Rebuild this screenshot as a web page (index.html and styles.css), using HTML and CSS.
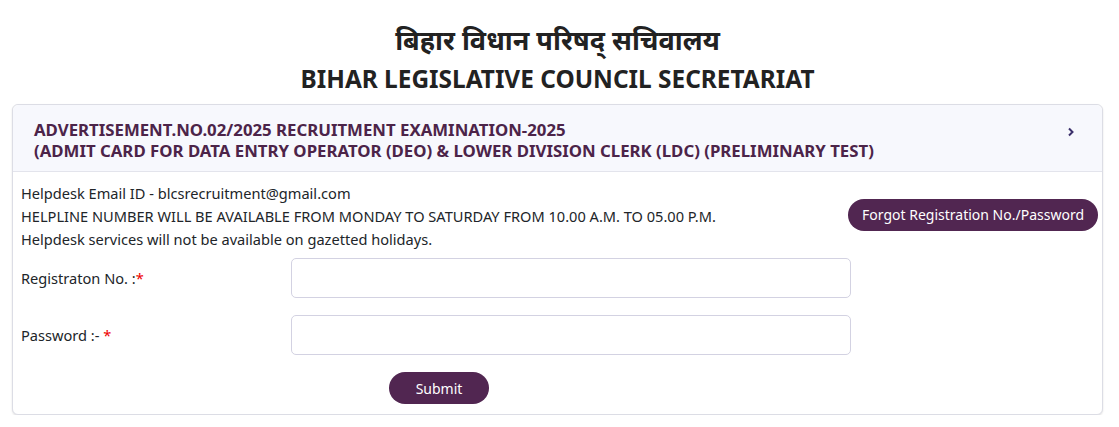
FILE: index.html
```html
<!DOCTYPE html>
<html lang="en">
<head>
<meta charset="utf-8">
<title>Bihar Legislative Council Secretariat</title>
<link rel="stylesheet" href="styles.css">
</head>
<body>
<header class="site-head">
  <h1 class="title-hi">बिहार विधान परिषद् सचिवालय</h1>
  <h2 class="title-en">BIHAR LEGISLATIVE COUNCIL SECRETARIAT</h2>
</header>
<section class="card">
  <div class="card-head">
    <div class="card-title">
      <div>ADVERTISEMENT.NO.02/2025 RECRUITMENT EXAMINATION-2025</div>
      <div>(ADMIT CARD FOR DATA ENTRY OPERATOR (DEO) &amp; LOWER DIVISION CLERK (LDC) (PRELIMINARY TEST)</div>
    </div>
    <svg class="chev" width="10" height="12" viewBox="0 0 10 12"><path d="M3 2.5 L6.5 6 L3 9.5" fill="none" stroke="#3b2f6b" stroke-width="2"/></svg>
  </div>
  <div class="card-body">
    <div class="info-row">
      <div class="info">
        <p>Helpdesk Email ID - blcsrecruitment@gmail.com</p>
        <p>HELPLINE NUMBER WILL BE AVAILABLE FROM MONDAY TO SATURDAY FROM 10.00 A.M. TO 05.00 P.M.</p>
        <p>Helpdesk services will not be available on gazetted holidays.</p>
      </div>
      <button class="btn btn-forgot" type="button">Forgot Registration No./Password</button>
    </div>
    <form class="login">
      <div class="field">
        <label for="reg">Registraton No. :<span class="req">*</span></label>
        <input id="reg" type="text">
      </div>
      <div class="field">
        <label for="pwd">Password :- <span class="req">*</span></label>
        <input id="pwd" type="password">
      </div>
      <div class="actions">
        <button class="btn btn-submit" type="button">Submit</button>
      </div>
    </form>
  </div>
</section>
</body>
</html>
```
FILE: styles.css
```css
* { box-sizing: border-box; }
body {
  margin: 0;
  padding: 0 16px 0 12px;
  font-family: "Noto Sans", "Open Sans", "Liberation Sans", sans-serif;
  color: #212529;
  background: #fff;
}
.site-head {
  text-align: center;
  padding-top: 18px;
}
.title-hi {
  margin: 0;
  font-size: 27px;
  line-height: 44px;
  font-weight: 700;
  color: #222;
}
.title-en {
  margin: 0;
  font-size: 24.4px;
  line-height: 34px;
  font-weight: 700;
  color: #222;
}
.card {
  margin-top: 8px;
  border: 1px solid #dcdde5;
  border-radius: 6px;
  box-shadow: 0 1px 2px rgba(0,0,0,0.12);
  background: #fff;
  height: 311px;
}
.card-head {
  display: flex;
  align-items: flex-start;
  justify-content: space-between;
  background: #f7f8fd;
  border-bottom: 1px solid #e3e4ec;
  border-radius: 6px 6px 0 0;
  padding: 14px 26px 11px 21px;
  height: 67px;
}
.card-title {
  font-size: 16.8px;
  font-weight: 700;
  line-height: 21px;
  color: #4c2449;
}
.chev { margin-top: 7px; }
.card-body {
  padding: 10px 4px 0 8px;
  font-size: 14.6px;
}
.info-row {
  display: flex;
  align-items: center;
  justify-content: space-between;
}
.info p {
  margin: 0;
  line-height: 23px;
}
.btn {
  border: none;
  border-radius: 17px;
  background: #512651;
  color: #fff;
  font-family: inherit;
  font-size: 14px;
  height: 32px;
}
.btn-forgot {
  padding: 0 14px;
  margin-bottom: 4px;
}
.login { margin-top: 7px; }
.field {
  display: grid;
  grid-template-columns: 270px 560px;
  align-items: center;
  margin-bottom: 17px;
}
.field label { font-size: 14.6px; }
.req { color: #e00; }
.field input {
  height: 40px;
  border: 1px solid #d3d2e2;
  border-radius: 5px;
  font-size: 14px;
  padding: 4px 10px;
}
.actions {
  padding-left: 368px;
}
.btn-submit {
  width: 100px;
}
```
